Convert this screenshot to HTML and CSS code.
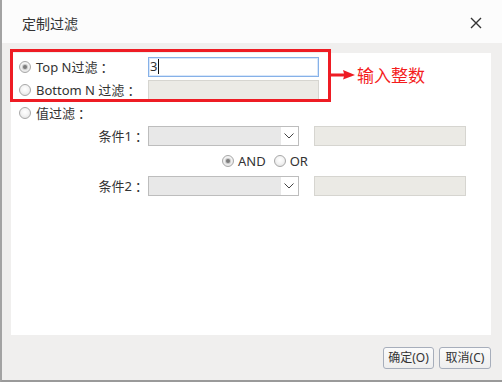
FILE: index.html
```html
<!DOCTYPE html>
<html lang="zh-CN">
<head>
<meta charset="utf-8">
<title>定制过滤</title>
<link rel="stylesheet" href="styles.css">
</head>
<body>
<div class="window">
  <div class="titlebar">
    <span class="title">定制过滤</span>
    <svg class="close" width="12" height="12" viewBox="0 0 12 12"><path d="M1 1 L11 11 M11 1 L1 11" stroke="#333" stroke-width="1.4" fill="none"/></svg>
  </div>
  <div class="body">
    <div class="panel">
      <div class="row">
        <label class="opt"><span class="radio checked"></span>Top N过滤<span class="colon">：</span></label>
        <div class="field active">3<span class="caret"></span></div>
      </div>
      <div class="row">
        <label class="opt"><span class="radio"></span>Bottom N 过滤<span class="colon">：</span></label>
        <div class="field disabled"></div>
      </div>
      <div class="row">
        <label class="opt"><span class="radio"></span>值过滤<span class="colon">：</span></label>
      </div>
      <div class="row row-cond">
        <span class="cond-label">条件1<span class="colon">：</span></span>
        <div class="select"><span class="sel-arrow"><svg width="10" height="6" viewBox="0 0 10 6"><path d="M0.5 0.5 L5 5 L9.5 0.5" stroke="#444" stroke-width="1" fill="none"/></svg></span></div>
        <div class="field disabled short"></div>
      </div>
      <div class="row row-logic">
        <label class="logic"><span class="radio checked"></span>AND</label>
        <label class="logic"><span class="radio"></span>OR</label>
      </div>
      <div class="row row-cond">
        <span class="cond-label">条件2<span class="colon">：</span></span>
        <div class="select"><span class="sel-arrow"><svg width="10" height="6" viewBox="0 0 10 6"><path d="M0.5 0.5 L5 5 L9.5 0.5" stroke="#444" stroke-width="1" fill="none"/></svg></span></div>
        <div class="field disabled short"></div>
      </div>
    </div>
    <div class="footer">
      <button class="btn">确定(O)</button>
      <button class="btn">取消(C)</button>
    </div>
  </div>
  <div class="annot-box"></div>
  <svg class="annot-arrow" width="30" height="14" viewBox="0 0 30 14"><polygon points="0,5.5 16,5.6 15,2 27,7 15,11.5 16,8.4 0,8.5" fill="#ee1c24"/></svg>
  <span class="annot-text">输入整数</span>
</div>
</body>
</html>
```

FILE: styles.css
```css
* { box-sizing: border-box; }
html, body { margin: 0; padding: 0; background: #ffffff; }
body {
  font-family: "Noto Sans", "Noto Sans CJK SC", sans-serif;
  color: #333;
}
.window {
  position: relative;
  width: 502px;
  height: 382px;
  border-left: 2px solid #a3a3a3;
  border-bottom: 2px solid #9a9a9a;
  display: flex;
  flex-direction: column;
  background: #f0efee;
}
.titlebar {
  position: relative;
  height: 43px;
  flex: none;
  background: #fcfcfc;
  display: flex;
  align-items: center;
  padding-left: 20px;
  padding-top: 3px;
}
.title {
  font-size: 14px;
  line-height: 20px;
  color: #333;
  font-family: "Noto Sans CJK SC", sans-serif;
}
.close {
  position: absolute;
  left: 468px;
  top: 17px;
}
.body {
  flex: 1;
  padding: 10px 11px 0 9px;
  display: flex;
  flex-direction: column;
}
.panel {
  height: 282px;
  background: #ffffff;
  padding: 2px 0 0 8px;
  font-size: 13px;
}
.row {
  display: flex;
  align-items: center;
  height: 23px;
}
.row-cond { height: 24px; }
.row-cond:last-child { height: 25px; }
.row-logic { height: 25px; padding-left: 203px; }
.opt {
  width: 129px;
  display: flex;
  align-items: center;
  white-space: nowrap;
  line-height: 16px;
}
.colon {
  display: inline-block;
  margin-left: 3px;
  font-family: "Noto Sans CJK SC", sans-serif;
}
.radio {
  width: 12px;
  height: 12px;
  border-radius: 50%;
  border: 1px solid #a8a8a8;
  background: radial-gradient(circle at 50% 40%, #ffffff 0%, #f4f4f4 45%, #dcdcdc 100%);
  margin-right: 5px;
  flex: none;
  position: relative;
}
.radio.checked::after {
  content: "";
  position: absolute;
  left: 3px;
  top: 3px;
  width: 4px;
  height: 4px;
  border-radius: 50%;
  background: #7c7c7c;
  box-shadow: 0 0 1px 1px #c4c4c4;
}
.field {
  width: 171px;
  height: 20px;
  border: 1px solid #d6d5d0;
  background: #ebeae5;
  font-size: 13px;
  line-height: 17px;
  padding-left: 1px;
  display: flex;
  align-items: center;
}
.field.active {
  background: #ffffff;
  border-color: #86b1e8;
  box-shadow: inset 0 0 0 1px #d8e7fa;
  color: #333;
}
.caret {
  width: 1px;
  height: 15px;
  background: #111;
  margin-left: 1px;
}
.field.short {
  width: 152px;
  margin-left: 15px;
}
.cond-label {
  width: 129px;
  text-align: right;
  padding-right: 0;
  line-height: 16px;
  white-space: nowrap;
}
.select {
  width: 151px;
  height: 20px;
  border: 1px solid #bdbdbd;
  background: #e8e8e8;
  display: flex;
  justify-content: flex-end;
}
.sel-arrow {
  width: 17px;
  background: #ffffff;
  display: flex;
  align-items: center;
  justify-content: center;
  padding-right: 1px;
}
.logic {
  display: flex;
  align-items: center;
  margin-right: 8px;
  line-height: 16px;
}
.logic .radio { margin-right: 4px; }
.footer {
  display: flex;
  justify-content: flex-end;
  padding-top: 12px;
  gap: 5px;
}
.btn {
  width: 51px;
  height: 22px;
  padding: 0;
  border: 1px solid #a7aebb;
  border-radius: 3px;
  background: linear-gradient(#fbfbfb, #eeeeee);
  font-family: "Noto Sans", "Noto Sans CJK SC", sans-serif;
  font-size: 12px;
  color: #333;
  line-height: 18px;
}
.btn + .btn { width: 52px; }
.annot-box {
  position: absolute;
  left: 8px;
  top: 49px;
  width: 321px;
  height: 53px;
  border: 3px solid #ee1c24;
}
.annot-arrow {
  position: absolute;
  left: 326px;
  top: 68px;
}
.annot-text {
  position: absolute;
  left: 355px;
  top: 64px;
  font-family: "Noto Sans CJK SC", sans-serif;
  font-size: 17px;
  line-height: 22px;
  color: #f41c1c;
}
```
